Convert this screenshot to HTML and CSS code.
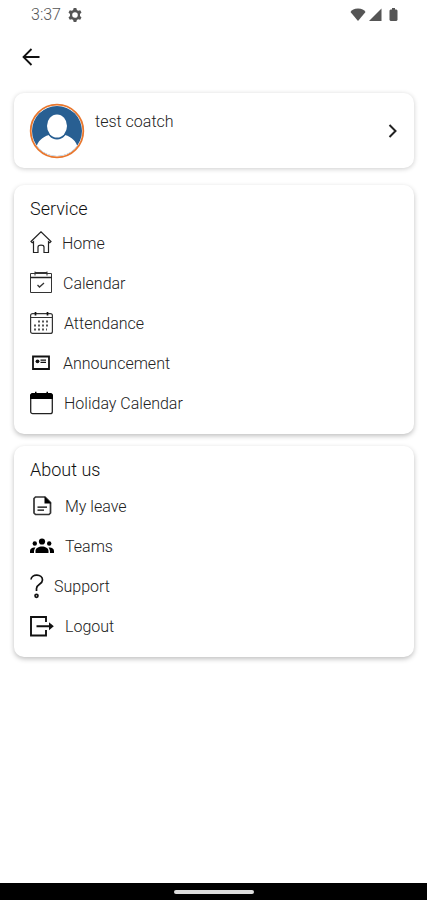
FILE: index.html
```html
<!DOCTYPE html>
<html lang="en">
<head>
<meta charset="utf-8">
<meta name="viewport" content="width=device-width, initial-scale=1">
<title>Menu</title>
<link rel="stylesheet" href="styles.css">
</head>
<body>
<div class="screen">
  <header class="status-bar">
    <span class="time">3:37</span>
    <svg width="14" height="14" viewBox="0 0 14 14"><path fill="#555" fill-rule="evenodd" d="M5.700 0h2.600l.6 2.100 1.200.7 2.100-.6 1.300 2.300L12 6.100v1.800l1.500 1.600-1.300 2.300-2.100-.6-1.200.7-.6 2.100H5.700l-.6-2.100-1.200-.7-2.100.6L.5 9.500 2 7.900V6.100L.5 4.500l1.300-2.300 2.100.6 1.200-.7zM7 4.200a2.800 2.800 0 1 0 0 5.600 2.800 2.800 0 0 0 0-5.600z"/></svg>
    <div class="signals">
      <svg width="16" height="14" viewBox="0 0 16 14"><path fill="#555" d="M.5 4C2 2 4 .5 8 .5S14 2 15.500 4L8 13z"/></svg>
      <svg width="14" height="14" viewBox="0 0 14 14"><path fill="#555" d="M13.500.5v12.500H1z"/></svg>
      <svg class="battery" width="9" height="14" viewBox="0 0 9 14"><path fill="#555" d="M3 0h3v1.500h1.500l1 1V12l-1 1h-6l-1-1V2.500l1-1H3z"/></svg>
    </div>
  </header>

  <nav class="toolbar">
    <button class="back" type="button" aria-label="Back">
      <svg width="18" height="18" viewBox="0 0 18 18" fill="none" stroke="#111" stroke-width="1.800"><path d="M17.500 9H2M9.500 1 1.500 9l8 8"/></svg>
    </button>
  </nav>

  <main class="cards">
    <a class="card profile" href="#profile">
      <svg class="avatar" width="56" height="56" viewBox="0 0 56 56">
        <defs><clipPath id="face"><circle cx="28" cy="28" r="25"/></clipPath></defs>
        <circle cx="28" cy="28" r="26.300" fill="#fff" stroke="#e8772e" stroke-width="1.800"/>
        <g clip-path="url(#face)">
          <path fill="#285f92" d="M0 0h56v56H0z"/>
          <path fill="#fff" d="M7 56V45c2-7 6-11 13-13 4 5 12 5 16 0 7 2 11 6 13 13v11z"/>
          <ellipse cx="28" cy="23.500" rx="11" ry="13" fill="#285f92"/>
          <ellipse cx="28" cy="23" rx="10" ry="11.500" fill="#fff"/>
        </g>
      </svg>
      <span class="name">test coatch</span>
      <svg class="chevron" width="9" height="14" viewBox="0 0 9 14" fill="none" stroke="#222" stroke-width="2"><path d="m1.500 1 6 6-6 6"/></svg>
    </a>

    <section class="card group">
      <h2>Service</h2>
      <ul>
        <li><a href="#home">
          <svg width="22" height="24" viewBox="0 0 22 24" fill="none" stroke="#222" stroke-width="1.200"><path d="M1 10.500 11 .8l10 9.700-1.200 1.300-1.300-1V21.500H14V16c0-2.500-6-2.500-6 0v5.500H3.500V10.800l-1.300 1z"/></svg>
          <span>Home</span></a></li>
        <li><a href="#calendar">
          <svg width="23" height="24" viewBox="0 0 23 24" fill="none" stroke="#333"><path d="M.5 2.500h21v19H.5z"/><path d="M5 .5v4M17 .5v4M5 1.500h12"/><path stroke="#222" stroke-width="1.500" d="M.5 6.500h21"/><path stroke-width="1.300" d="m7.500 14 2 2 4.500-4"/></svg>
          <span>Calendar</span></a></li>
        <li><a href="#attendance">
          <svg width="24" height="24" viewBox="0 0 24 24" fill="none" stroke="#333"><rect x=".6" y="2.600" width="21.800" height="19.800" rx="2" stroke-width="1.200"/><path d="M1 6.500h21"/><path stroke="#111" stroke-width="1.700" d="M5.500 1v3.500M17.500 1v3.500"/><path stroke="#555" stroke-width="2" stroke-dasharray="2 2" d="M8 10.500h11M4 14.500h15M4 18.500h13"/></svg>
          <span>Attendance</span></a></li>
        <li><a href="#announcement">
          <svg width="23" height="24" viewBox="0 0 23 24"><path fill="none" stroke="#111" stroke-width="1.800" d="M3 5.500h16v12.500H3z"/><circle cx="7.500" cy="10.300" r="1.900" fill="#111"/><path fill="#111" d="M10.500 8.500H16v1.300h-5.500zM10.500 10.800H16V12h-5.500z"/></svg>
          <span>Announcement</span></a></li>
        <li><a href="#holidays">
          <svg width="24" height="24" viewBox="0 0 24 24"><rect x=".7" y="2.700" width="21.600" height="20" rx="2" fill="none" stroke="#222" stroke-width="1.300"/><path d="M0 8V4l2-2h3V.8h1.500V2h10V.8H18V2h3l2 2v4z"/></svg>
          <span>Holiday Calendar</span></a></li>
      </ul>
    </section>

    <section class="card group about">
      <h2>About us</h2>
      <ul>
        <li><a href="#leave">
          <svg width="25" height="24" viewBox="0 0 25 24"><path fill="none" stroke="#333" stroke-width="1.700" d="M5.500 3H15l5.500 5.500V19l-1.500 1.500H5.500L4 19V4.500z"/><path d="M14.500 2.500V9.500h6.800zM7.500 12.500H17v1.200H7.500zM7.500 15.500H14v1.200H7.500z"/></svg>
          <span>My leave</span></a></li>
        <li><a href="#teams">
          <svg width="25" height="24" viewBox="0 0 25 24"><circle cx="12" cy="7.500" r="3.100"/><circle cx="4.800" cy="9.500" r="2.200"/><circle cx="19.200" cy="9.500" r="2.200"/><path d="M5.500 19v-2c0-6 13-6 13 0v2zM0 19v-2c0-2.500 2.500-4 5.500-3.500C4.200 15 4 16.500 4 19zM24 19v-2c0-2.500-2.500-4-5.500-3.500C19.800 15 20 16.500 20 19z"/></svg>
          <span>Teams</span></a></li>
        <li><a href="#support">
          <svg width="14" height="26" viewBox="0 0 14 26" fill="none" stroke="#111" stroke-width="1.700"><path d="M1 6.500C1.500.5 12.500.8 12.500 7c0 4.500-6 4-6 8.500V18"/><circle cx="6.500" cy="22.800" r="1.500"/></svg>
          <span>Support</span></a></li>
        <li><a href="#logout">
          <svg width="25" height="24" viewBox="0 0 25 24"><path fill="none" stroke="#111" stroke-width="1.900" d="M16 8V3H1v18.500h15v-5.500M6.500 12.300H21"/><path fill="#111" d="m19 8.300 4.800 4-4.800 4z"/></svg>
          <span>Logout</span></a></li>
      </ul>
    </section>
  </main>

  <footer class="system-nav"><span class="handle"></span></footer>
</div>
</body>
</html>
```
FILE: styles.css
```css
* {
  box-sizing: border-box;
}

body {
  margin: 0;
  background: #fff;
  color: #222;
  font-family: Roboto, "Liberation Sans", sans-serif;
  font-size: 16px;
  font-weight: 300;
}

svg {
  display: block;
  flex-shrink: 0;
}

a {
  color: inherit;
  text-decoration: none;
}

.screen {
  display: flex;
  flex-direction: column;
  min-height: 100vh;
}

.status-bar {
  display: flex;
  align-items: center;
  gap: 7px;
  height: 29px;
  padding: 0 29px 0 31px;
}

.time {
  color: #555;
}

.signals {
  display: flex;
  gap: 2px;
  margin-left: auto;
}

.battery {
  margin-left: 5px;
}

.toolbar {
  display: flex;
  align-items: center;
  height: 56px;
  padding: 0 22px;
}

.back {
  padding: 0;
  border: 0;
  background: none;
}

.cards {
  flex: 1;
  padding: 8px 13px 24px 14px;
}

.card {
  border-radius: 10px;
  background: #fff;
  box-shadow: 0 1px 5px rgba(0, 0, 0, 0.2);
}

.profile {
  display: flex;
  align-items: center;
  height: 75px;
  padding: 0 17px 0 15px;
}

.name {
  align-self: flex-start;
  margin-left: 10px;
  padding-top: 19px;
  line-height: 20px;
}

.chevron {
  margin-left: auto;
}

.group {
  margin-top: 17px;
  padding: 12px 16px 11px;
  box-shadow: 0 2px 5px rgba(0, 0, 0, 0.25);
}

.about {
  margin-top: 12px;
}

h2 {
  margin: 0;
  color: #111;
  font-size: 18px;
  font-weight: 300;
  line-height: 24px;
}

ul {
  margin: 0;
  padding: 2px 0 0;
  list-style: none;
}

.about ul {
  padding-top: 4px;
}

li a {
  display: flex;
  align-items: center;
  gap: 10px;
  height: 40px;
}

.system-nav {
  display: flex;
  align-items: center;
  justify-content: center;
  height: 17px;
  background: #000;
}

.handle {
  width: 80px;
  height: 4px;
  border-radius: 2px;
  background: #ddd;
}
```
